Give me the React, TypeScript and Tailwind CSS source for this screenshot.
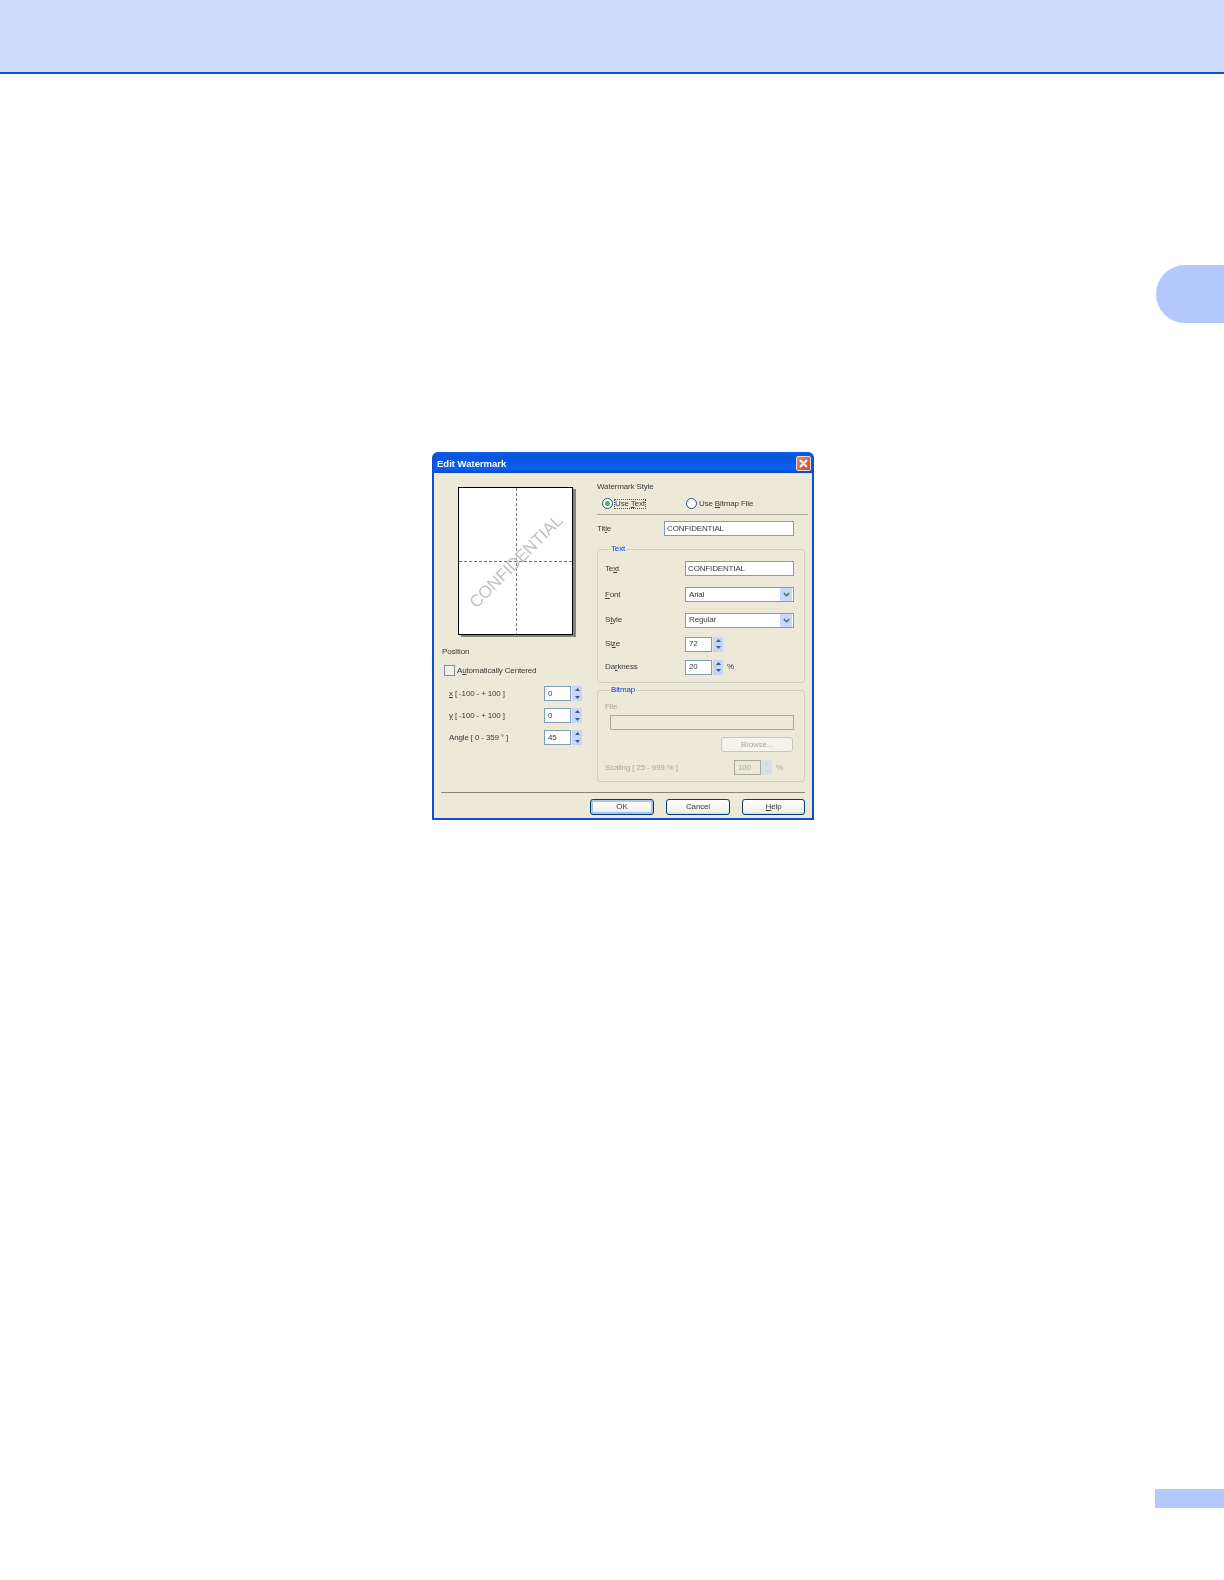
import type { ReactNode } from 'react';

const FIELD = 'border border-[#7f9db9] bg-white';

function U({ children }: { children: ReactNode }) {
	return <span className="underline underline-offset-1">{children}</span>;
}

function SpinButtons({ disabled }: { disabled?: boolean }) {
	return (
		<div className={`flex h-full w-[11px] flex-col pl-px ${disabled ? 'opacity-50' : ''}`}>
			{[0, 1].map((i) => (
				<div key={i} className="flex flex-1 items-center justify-center bg-[#c6d6f6]">
					<svg width="5" height="3" viewBox="0 0 5 3">
						<path d={i === 0 ? 'M0 3 L2.5 0 L5 3 Z' : 'M0 0 L2.5 3 L5 0 Z'} fill={disabled ? '#c8c6b8' : '#4d5a78'} />
					</svg>
				</div>
			))}
		</div>
	);
}

function Spinner({ value, disabled, suffix }: { value: string; disabled?: boolean; suffix?: string }) {
	return (
		<div className="flex h-[15px] items-center">
			<div
				className={`flex h-full w-[27px] items-center border pl-[3px] ${
					disabled ? 'border-[#a5a99a] bg-[#ece9d8] text-[#aca899]' : 'border-[#7f9db9] bg-white'
				}`}
			>
				{value}
			</div>
			<SpinButtons disabled={disabled} />
			{suffix && <span className={`ml-[4px] ${disabled ? 'text-[#aca899]' : ''}`}>{suffix}</span>}
		</div>
	);
}

function Combo({ value }: { value: string }) {
	return (
		<div className={`flex h-[15px] w-[109px] items-center justify-between pl-[3px] pr-px ${FIELD}`}>
			<span>{value}</span>
			<div className="flex h-[13px] w-[12px] items-center justify-center rounded-[1px] bg-[#c9d8f8]">
				<svg width="7" height="5" viewBox="0 0 7 5">
					<path d="M.8 1 L3.5 3.7 L6.2 1" fill="none" stroke="#4d6185" strokeWidth="1.5" />
				</svg>
			</div>
		</div>
	);
}

function Group({ title, className, children }: { title: string; className: string; children: ReactNode }) {
	return (
		<fieldset className={`rounded-[3px] border border-[#d0d0bf] ${className}`}>
			<legend className="ml-[5px] px-px leading-[10px] text-[#0046d5]">{title}</legend>
			{children}
		</fieldset>
	);
}

function Radio({ checked }: { checked?: boolean }) {
	return (
		<span className="flex h-[11px] w-[11px] items-center justify-center rounded-full border border-[#1c5180] bg-white">
			{checked && <span className="h-[5px] w-[5px] rounded-full bg-[#4dbb4d]" />}
		</span>
	);
}

function DialogButton({ children, primary, disabled, className }: { children: ReactNode; primary?: boolean; disabled?: boolean; className?: string }) {
	return (
		<div
			className={`flex items-center justify-center rounded-[3px] border ${
				disabled
					? 'border-[#c9c7ba] bg-[#f4f3ec] text-[#aca899]'
					: `border-[#003c74] bg-[linear-gradient(180deg,#ffffff,#f0f0ea_85%,#dcd8c8)] ${primary ? 'shadow-[inset_0_0_0_2px_#a9c5ef]' : ''}`
			} ${className ?? ''}`}
		>
			{children}
		</div>
	);
}

function PositionRow({ label, value }: { label: ReactNode; value: string }) {
	return (
		<div className="flex h-[15px] items-center justify-between">
			<span>{label}</span>
			<Spinner value={value} />
		</div>
	);
}

function WatermarkPreview() {
	return (
		<div className="relative h-[148px] w-[115px] border border-black bg-white shadow-[3px_2px_0_#85857c]">
			<div className="absolute bottom-0 left-[57px] top-0 w-px bg-[repeating-linear-gradient(180deg,#777_0,#777_3px,transparent_3px,transparent_5px)]" />
			<div className="absolute left-0 right-0 top-[73px] h-px bg-[repeating-linear-gradient(90deg,#777_0,#777_3px,transparent_3px,transparent_5px)]" />
			<span className="absolute left-[-8px] top-[65px] w-[130px] -rotate-45 text-center text-[17px] tracking-[-0.1px] text-[#c2c2c2]">
				CONFIDENTIAL
			</span>
		</div>
	);
}

function Row({ label, className, children }: { label: ReactNode; className?: string; children: ReactNode }) {
	return (
		<div className={`flex h-[15px] items-center justify-between ${className ?? ''}`}>
			<span>{label}</span>
			<div className="w-[109px]">{children}</div>
		</div>
	);
}

function EditWatermarkDialog() {
	return (
		<div className="ml-[432px] flex h-[368px] w-[382px] flex-col rounded-t-[6px] bg-[#0a4fd6] px-[2px] pb-[2px] font-['Liberation_Sans',sans-serif] text-[8px] leading-none tracking-[-0.15px] text-[#3a3a3a] blur-[0.25px]">
			<div className="flex h-[21px] shrink-0 items-center justify-between rounded-t-[6px] bg-[linear-gradient(180deg,#0a5ee6,#0a54dd_25%,#0b5ff0_80%,#0a49c4)] pl-[3px] pr-[1px] pt-[2px] text-[9.5px] font-bold tracking-normal text-white">
				<span>Edit Watermark</span>
				<div className="flex h-[15px] w-[15px] items-center justify-center rounded-[2px] border border-[#f3d8cf] bg-[linear-gradient(135deg,#e88a6e,#c9482c)]">
					<svg width="9" height="9" viewBox="0 0 9 9">
						<path d="M1 1 L8 8 M8 1 L1 8" stroke="#fff" strokeWidth="1.9" />
					</svg>
				</div>
			</div>
			<div className="flex min-h-0 flex-1 flex-col bg-[#ece9d8]">
				<div className="flex h-[319px] shrink-0">
					<div className="w-[163px] shrink-0 pl-[8px] pt-[14px]">
						<div className="ml-[16px]">
							<WatermarkPreview />
						</div>
						<div className="mt-[13px]">Position</div>
						<div className="ml-[2px] mt-[9px] flex items-center gap-[2px]">
							<span className="h-[11px] w-[11px] border border-[#7f8fa0] bg-[#f1f0e6]" />
							<span>
								A<U>u</U>tomatically Centered
							</span>
						</div>
						<div className="ml-[7px] mt-[10px] flex w-[133px] flex-col gap-[7px]">
							<PositionRow label={<><U>x</U> [ -100 - + 100 ]</>} value="0" />
							<PositionRow label={<><U>y</U> [ -100 - + 100 ]</>} value="0" />
							<PositionRow label="Angle [ 0 - 359 ° ]" value="45" />
						</div>
					</div>
					<div className="min-w-0 flex-1 pt-[10px]">
						<div className="pb-[7px]">Watermark Style</div>
						<div className="flex h-[17px] w-[211px] items-start border-b border-[#aca899] pl-[5px]">
							<div className="flex w-[84px] items-center gap-[2px]">
								<Radio checked />
								<span className="outline-1 outline-dotted outline-[#555]">
									Use <U>T</U>ext
								</span>
							</div>
							<div className="flex items-center gap-[2px]">
								<Radio />
								<span>
									Use <U>B</U>itmap File
								</span>
							</div>
						</div>
						<div className="mt-[6px] flex w-[197px] items-center justify-between">
							<span>Tit<U>l</U>e</span>
							<div className={`flex h-[15px] w-[130px] items-center pl-[2px] ${FIELD}`}>CONFIDENTIAL</div>
						</div>
						<Group title="Text" className="mt-[8px] h-[139px] w-[208px] px-[7px]">
							<div className="mt-[7px] flex flex-col pr-[3px]">
								<Row label={<>Te<U>x</U>t</>}>
									<div className={`flex h-[15px] w-[109px] items-center pl-[2px] ${FIELD}`}>CONFIDENTIAL</div>
								</Row>
								<Row className="mt-[11px]" label={<><U>F</U>ont</>}><Combo value="Arial" /></Row>
								<Row className="mt-[10.5px]" label={<>S<U>t</U>yle</>}><Combo value="Regular" /></Row>
								<Row className="mt-[9px]" label={<>Si<U>z</U>e</>}><Spinner value="72" /></Row>
								<Row className="mt-[8px]" label={<>Da<U>r</U>kness</>}><Spinner value="20" suffix="%" /></Row>
							</div>
						</Group>
						<Group title="Bitmap" className="mt-[2px] h-[97px] w-[208px] px-[7px] text-[#aca899]">
							<div className="mt-[8px]">File</div>
							<div className="ml-[5px] mt-[4px] h-[15px] w-[184px] border border-[#a5a99a]" />
							<div className="mt-[7px] flex justify-end pr-[4px]">
								<DialogButton disabled className="h-[15px] w-[72px]">Browse...</DialogButton>
							</div>
							<div className="mt-[8px] flex items-center justify-between pr-[14px]">
								<span>Scaling [ 25 - 999 % ]</span>
								<Spinner value="100" disabled suffix="%" />
							</div>
						</Group>
					</div>
				</div>
				<div className="mx-[7px] border-t border-[#8a8778]" />
				<div className="flex justify-end gap-[12px] pr-[7px] pt-[6px]">
					<DialogButton primary className="h-[16px] w-[64px]">OK</DialogButton>
					<DialogButton className="h-[16px] w-[64px]">Cancel</DialogButton>
					<DialogButton className="h-[16px] w-[63px]"><U>H</U>elp</DialogButton>
				</div>
			</div>
		</div>
	);
}

export default function App() {
	return (
		<div className="h-[1580px] w-[1224px] overflow-hidden bg-white">
			<div className="h-[74px] border-b-2 border-[#0a50d8] bg-[#cbdcfc]" />
			<div className="ml-auto mt-[191px] h-[58px] w-[68px] rounded-l-[29px] bg-[#b3c8fd]" />
			<div className="mt-[129px]">
				<EditWatermarkDialog />
			</div>
			<div className="ml-auto mt-[669px] h-[19px] w-[69px] bg-[#b3c8fd]" />
		</div>
	);
}
